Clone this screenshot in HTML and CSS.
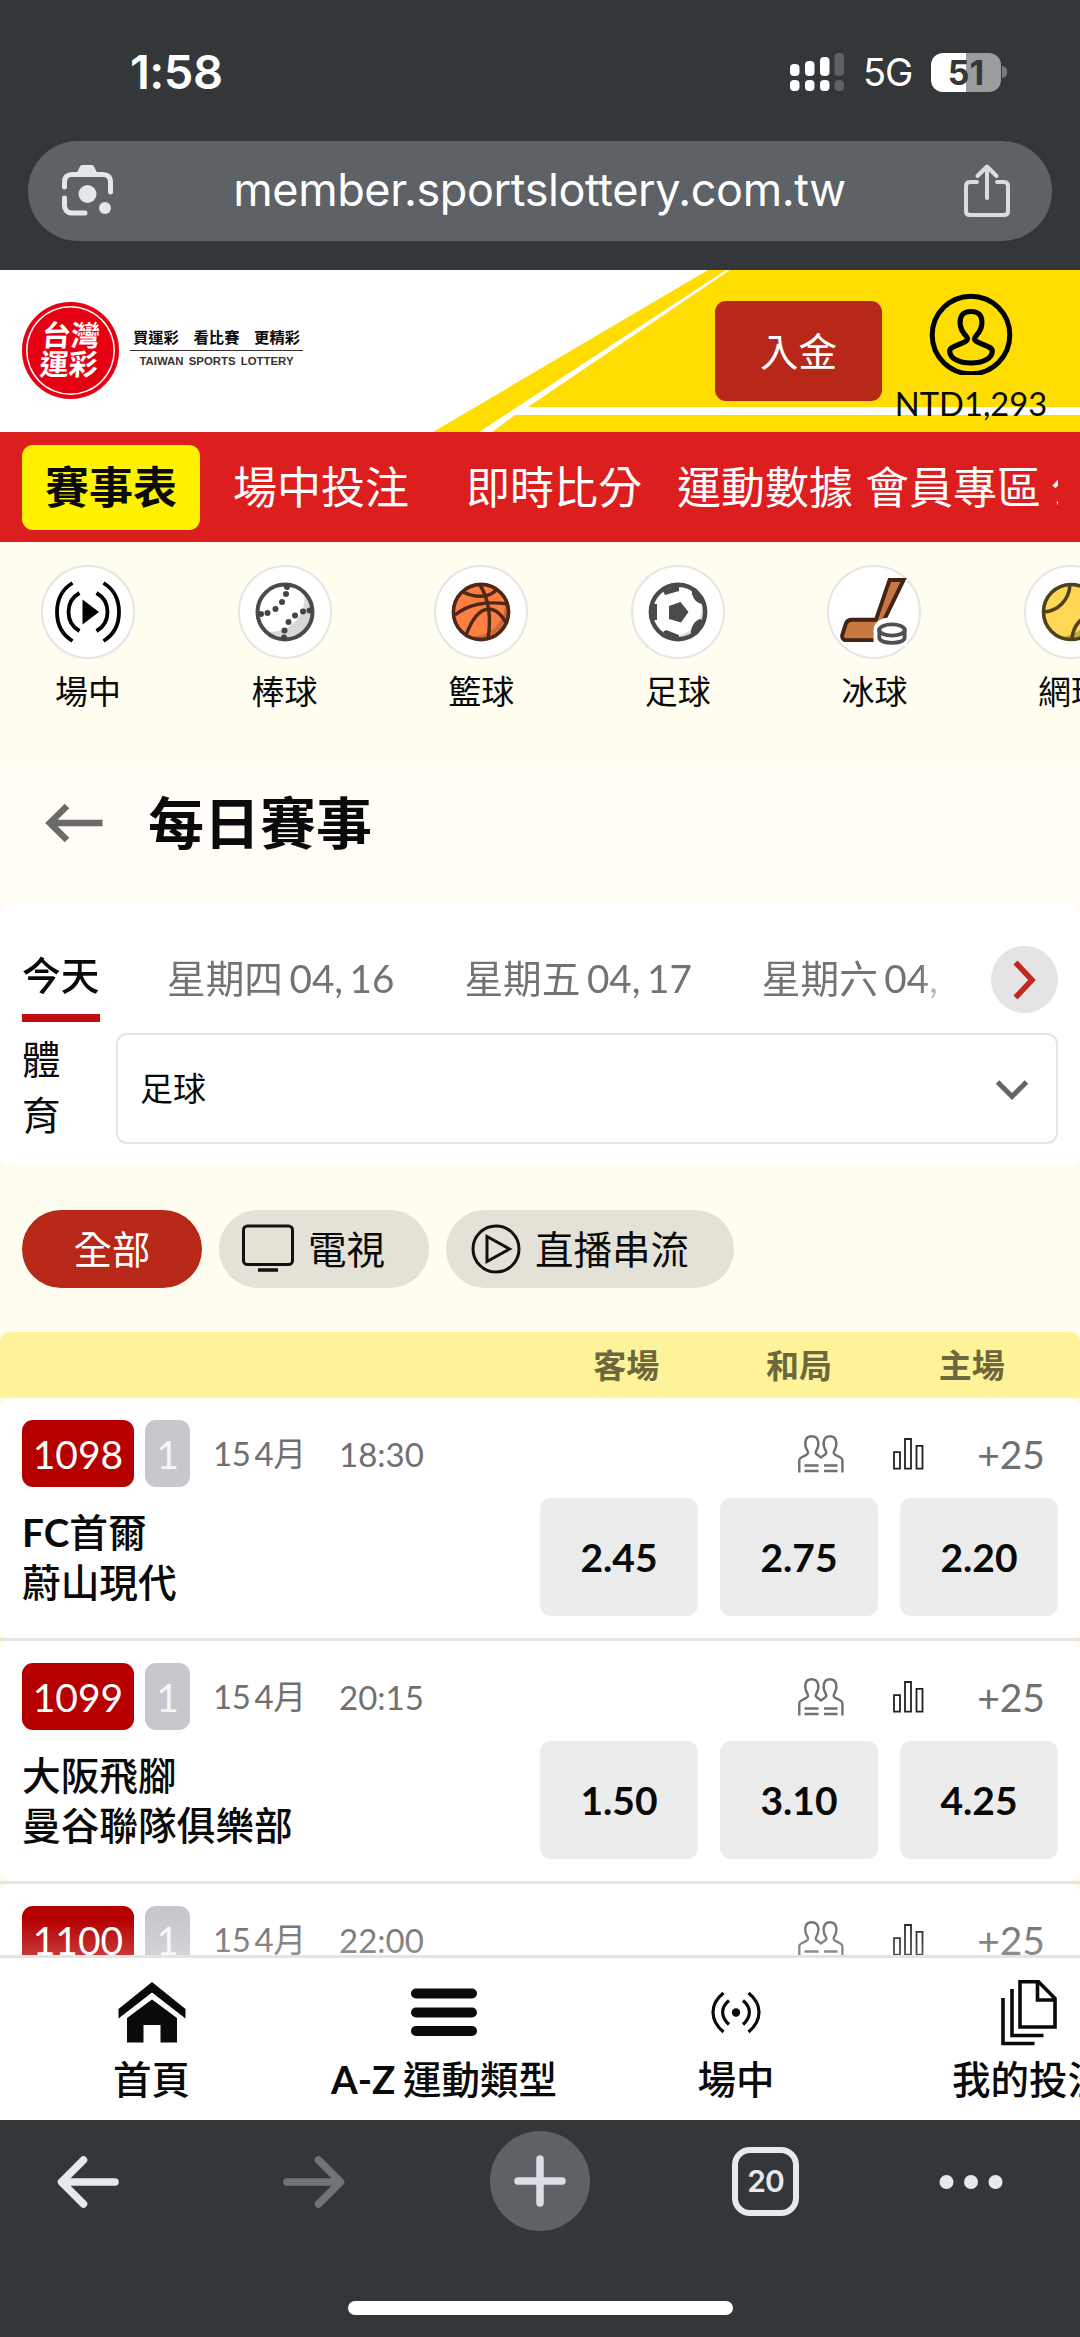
FILE: index.html
```html
<!DOCTYPE html>
<html lang="zh-Hant">
<head>
<meta charset="utf-8">
<title>每日賽事</title>
<link rel="stylesheet" href="styles.css">
</head>
<body>
<svg class="defs" width="0" height="0" aria-hidden="true">
  <symbol id="people" viewBox="0 0 46 38">
    <path d="M1.3 37.500V25.500c0-1.500.6-2.300 2-3l5-2.600c2-1 2.200-2 1.200-4C7.300 12.500 7 9.500 7.400 6.500 8 3 10.200 1.200 13.500 1.200S19.500 3 20.200 6.500c.5 3 .1 6-2 9.400-1 2-.8 3 1.200 4l3.600 2.600 3.600-2.600c2-1 2.200-2 1.200-4-2.100-3.400-2.500-6.400-2-9.400C26.500 3 28.700 1.200 32 1.200S37.500 3 38.200 6.500c.5 3 .1 6-2 9.400-1 2-.8 3 1.200 4l5 2.600c1.400.7 2 1.500 2 3v12" fill="none" stroke="#707070" stroke-width="2.400"/>
    <path d="M6.500 30.500h14M6.500 36h14M26 30.500h13.500M26 36h13.500" stroke="#707070" stroke-width="2.700"/>
  </symbol>
  <symbol id="stats" viewBox="0 0 31 32">
    <path d="M1 14.200h6v16.500H1zM12 1h6v29.700h-6zM23.500 7.800h6v22.900h-6z" fill="none" stroke="#222" stroke-width="1.800"/>
  </symbol>
</svg>

<header class="browser-top">
  <div class="status">
    <span class="clock">1:58</span>
    <div class="status-right">
      <svg width="54" height="40" viewBox="0 0 54 40" fill="#fff"><rect y="12" width="9.500" height="12" rx="4"/><rect x="15" y="9" width="9.500" height="15" rx="4"/><rect x="30" y="5" width="9.500" height="19" rx="4"/><rect y="28" width="9.500" height="11" rx="4"/><rect x="15" y="28" width="9.500" height="11" rx="4"/><rect x="30" y="28" width="9.500" height="11" rx="4"/><g fill="#5e6163"><rect x="44.500" y="1" width="9.500" height="23" rx="4"/><rect x="44.500" y="28" width="9.500" height="11" rx="4"/></g></svg>
      <span class="network">5G</span>
      <span class="battery">51</span><i class="nub"></i>
    </div>
  </div>
  <div class="omnibox">
    <svg width="54" height="54" viewBox="0 0 54 54"><path d="M3.500 23v-5c0-5 3-7.500 7.500-7.500h31c4.500 0 7.500 2.500 7.500 7.500v10M3.500 34v7c0 5 3 8 8 8h12.500" fill="none" stroke="#e3e7ea" stroke-width="5" stroke-linecap="round"/><path d="M14.500 11.500 19 2.500c.5-1 1.500-1.500 2.500-1.500h9c1 0 2 .5 2.500 1.500l4.500 9z" fill="#e3e7ea"/><circle cx="26.500" cy="30" r="9" fill="#e3e7ea"/><circle cx="44" cy="44" r="6" fill="#e3e7ea"/></svg>
    <span class="url">member.sportslottery.com.tw</span>
    <svg width="46" height="54" viewBox="0 0 46 54" fill="none" stroke="#d9dce0" stroke-width="4" stroke-linecap="round" stroke-linejoin="round"><path d="M13 18H6c-2.500 0-4 1.500-4 4v25c0 2.500 1.500 4 4 4h34c2.500 0 4-1.500 4-4V22c0-2.500-1.500-4-4-4h-7M23 34V3M13.500 12 23 2.500l9.500 9.500"/></svg>
  </div>
</header>

<section class="brand">
  <svg class="brand-bg" width="1080" height="162" viewBox="0 0 1080 162"><path d="M433 162 708 0H1080V162z" fill="#fd0"/><path d="M479 162 726 0h4L528 137H1080v8H515l-23 17z" fill="#fff"/></svg>
  <div class="seal"><span>台灣<br>運彩</span></div>
  <div class="slogan">
    <div class="slogan-zh"><span>買運彩</span><span>看比賽</span><span>更精彩</span></div>
    <div class="slogan-en">TAIWAN SPORTS LOTTERY</div>
  </div>
  <button class="deposit">入金</button>
  <div class="account">
    <svg width="84" height="82" viewBox="0 0 84 82" fill="none" stroke="#000"><circle cx="42" cy="42" r="38.800" stroke-width="5"/><path d="M38.500 45.500c0-3-6.500-5-7.300-14.500-.5-8.500 3-12.500 10.800-12.500s11.300 4 10.800 12.500c-.8 9.500-7.300 11.500-7.300 14.500 0 5.500 17.800 6.500 17.800 12.500C63.300 65.500 54 70 42 70S20.700 65.500 20.700 58c0-6 17.800-7 17.800-12.500z" stroke-width="5.200" stroke-linejoin="round"/></svg>
    <span>NTD1,293</span>
  </div>
</section>

<nav class="main-nav">
  <div class="main-nav-scroll">
    <a class="current">賽事表</a><a class="n2">場中投注</a><a class="n3">即時比分</a><a class="n4">運動數據</a><a class="n5">會員專區</a><a class="n6">公告</a>
  </div>
</nav>

<section class="sports">
  <div class="sport"><i><svg width="66" height="62" viewBox="0 0 66 62" fill="none" stroke="#000" stroke-width="3.800"><path d="M17.500 2C6 9 2 20 2 31s4 22 15.500 29M24.500 12c-8 4.500-11 11.500-11 19s3 14.500 11 19M48.500 2C60 9 64 20 64 31s-4 22-15.500 29M41.500 12c8 4.500 11 11.500 11 19s-3 14.500-11 19"/><path d="M27.500 18.500 44 31 27.500 43.500z" fill="#000" stroke="none"/></svg></i><span>場中</span></div>
  <div class="sport"><i><svg width="60" height="60" viewBox="0 0 60 60"><circle cx="30" cy="30" r="27" fill="#fff"/><path d="M49 12c3 22-14 38-36 38 12 11 31 8 40-6 6-11 5-23-4-32z" fill="#d8d8d8"/><circle cx="30" cy="30" r="27.500" fill="none" stroke="#4a4a4a" stroke-width="4"/><g fill="#444"><circle cx="6" cy="32" r="3"/><circle cx="12.500" cy="31" r="3"/><circle cx="20.500" cy="27" r="3"/><circle cx="27" cy="20" r="3"/><circle cx="31" cy="12" r="3"/><circle cx="32" cy="5" r="3"/><circle cx="54.500" cy="28.500" r="3"/><circle cx="48" cy="29.500" r="3"/><circle cx="40" cy="33.500" r="3"/><circle cx="33.500" cy="40" r="3"/><circle cx="29.500" cy="48.500" r="3"/><circle cx="29" cy="55.500" r="3"/></g></svg></i><span>棒球</span></div>
  <div class="sport"><i><svg width="60" height="60" viewBox="0 0 60 60"><circle cx="30" cy="30" r="28" fill="#ff7f43"/><path d="M54 15c2 20-8 37-33 40 12 5 30 1 35-15 2-9 2-18-2-25z" fill="#d0693a"/><g fill="none" stroke="#4d2717" stroke-width="3.400"><circle cx="30" cy="30" r="27.600" stroke-width="3.600"/><path d="M29 3c10 16 11 35 8 54M4 33c14-11 30-14 53-11M12 10c14 7 28 5 34-3M15 53c6-16 13-25 22-26 9 0 14 7 19 15"/></g></svg></i><span>籃球</span></div>
  <div class="sport"><i><svg width="60" height="60" viewBox="0 0 60 60"><circle cx="30" cy="30" r="28" fill="#fff"/><path d="M54 23c0 15-7 26-23 31v4c16 0 27-12 27-28z" fill="#d8d8d8"/><circle cx="30" cy="30" r="27.200" fill="none" stroke="#4a4a4a" stroke-width="4.400"/><path d="m21 24 11.500-4L40.500 30 33 40.500 21 37zM15 9 17 13 31 9V2zM44 8c-1 5 3 13 10 14l2-2L48 6zM3 22h6v16H3zM15 50l3-2 13 5v5l-8-1zM43 52c-1-6 4-14 9-15l5 3-8 13z" fill="#4a4a4a"/></svg></i><span>足球</span></div>
  <div class="sport"><i><svg width="68" height="68" viewBox="0 0 70 70"><path d="M65.500 2H51L37 43H12c-3 0-5 1.500-6 4L2.800 57c-1.500 4 0 7 4 7H38l8-22z" fill="#c8773f" stroke="#402516" stroke-width="4"/><path d="M34.500 70V54c0-7 5-12 14-13h20v29z" fill="#fff"/><g fill="#fff" stroke="#505050" stroke-width="4"><path d="M40.500 53.500v8c0 7 26 7 26 0v-8z"/><ellipse cx="53.500" cy="53.500" rx="13" ry="5.800"/></g></svg></i><span>冰球</span></div>
  <div class="sport"><i><svg width="60" height="60" viewBox="0 0 60 60"><circle cx="30" cy="30" r="27.500" fill="#ffd755"/><path d="M54 17c0 20-12 34-32 38 20 6 36-8 35-26z" fill="#c7a63f"/><g fill="none" stroke="#4d421a" stroke-width="3.600"><circle cx="30" cy="30" r="27.500"/><path d="M3 30c14-1 25-12 26-27M31 57c1-14 11-25 26-26"/></g></svg></i><span>網球</span></div>
</section>

<section class="title">
  <svg width="58" height="40" viewBox="0 0 58 40" fill="none" stroke="#6b6b68" stroke-width="6.500"><path d="M57.500 20H5M22 3 4.800 20 22 37"/></svg>
  <h1>每日賽事</h1>
</section>

<section class="filters">
  <div class="dates">
    <div class="dates-scroll">
      <a class="today">今天</a><a>星期四 04, 16</a><a>星期五 04, 17</a><a>星期六 04, 18</a>
    </div>
    <button class="next"><svg width="24" height="40" viewBox="0 0 24 40"><path d="M2.500 2.500 19 20 2.500 37.500" fill="none" stroke="#c0291e" stroke-width="5.500"/></svg></button>
  </div>
  <div class="sport-pick">
    <label>體育</label>
    <div class="select"><span>足球</span><svg width="34" height="22" viewBox="0 0 34 22"><path d="m2.500 3 14.500 14.500L31.500 3" fill="none" stroke="#666" stroke-width="5"/></svg></div>
  </div>
</section>

<section class="chips">
  <a class="chip all">全部</a>
  <a class="chip tv"><svg width="52" height="50" viewBox="0 0 52 50"><rect x="1.500" y="2" width="49" height="38.500" rx="4" fill="none" stroke="#111" stroke-width="3"/><path d="M16 46h20" stroke="#111" stroke-width="3.500"/></svg><span>電視</span></a>
  <a class="chip live"><svg width="50" height="50" viewBox="0 0 50 50" fill="none" stroke="#111" stroke-width="3"><circle cx="25" cy="25" r="23"/><path d="M16 12.500 38.500 25 16 37.500z" stroke-linejoin="miter"/></svg><span>直播串流</span></a>
</section>

<main class="board">
  <div class="board-head"><span>客場</span><span>和局</span><span>主場</span></div>
  <div class="board-rows">
    <article class="match">
      <div class="meta"><b class="code">1098</b><b class="leg">1</b><span class="day">15 4月</span><span class="time">18:30</span><svg class="people" width="46" height="38"><use href="#people"/></svg><svg class="stats" width="31" height="32"><use href="#stats"/></svg><span class="more">+25</span></div>
      <div class="line"><div class="teams"><b>FC</b>首爾<br>蔚山現代</div><button>2.45</button><button>2.75</button><button>2.20</button></div>
    </article>
    <article class="match">
      <div class="meta"><b class="code">1099</b><b class="leg">1</b><span class="day">15 4月</span><span class="time">20:15</span><svg class="people" width="46" height="38"><use href="#people"/></svg><svg class="stats" width="31" height="32"><use href="#stats"/></svg><span class="more">+25</span></div>
      <div class="line"><div class="teams">大阪飛腳<br>曼谷聯隊俱樂部</div><button>1.50</button><button>3.10</button><button>4.25</button></div>
    </article>
    <article class="match">
      <div class="meta"><b class="code">1100</b><b class="leg">1</b><span class="day">15 4月</span><span class="time">22:00</span><svg class="people" width="46" height="38"><use href="#people"/></svg><svg class="stats" width="31" height="32"><use href="#stats"/></svg><span class="more">+25</span></div>
    </article>
  </div>
</main>

<nav class="tabbar">
  <a class="t1"><svg width="68" height="62" viewBox="0 0 68 62" fill="#0a0a0a"><path d="M34 1 67.500 28v9.500L34 11.500.5 37.500V28z"/><path d="M34 18.500 59 37v24.500H42.500V44h-17v17.500H9V37z"/></svg><span>首頁</span></a>
  <a class="t2"><svg width="66" height="62" viewBox="0 0 66 62" fill="#0a0a0a"><rect y="7.500" width="66" height="10" rx="5"/><rect y="26.500" width="66" height="10" rx="5"/><rect y="45" width="66" height="10" rx="5"/></svg><span><b>A-Z</b> 運動類型</span></a>
  <a class="t3"><svg width="50" height="62" viewBox="0 0 50 62" fill="none" stroke="#0a0a0a" stroke-width="3.200"><path d="M12.500 12c-14 11-14 27 0 39M37.500 12c14 11 14 27 0 39M18 19.500c-8.500 7-8.500 16 0 24M32 19.500c8.500 7 8.500 16 0 24"/><circle cx="25" cy="31.500" r="4.200" fill="#0a0a0a" stroke="none"/></svg><span>場中</span></a>
  <a class="t4"><svg width="58" height="68" viewBox="0 0 58 68" fill="none" stroke="#0a0a0a" stroke-width="3.600"><path d="M20 2.800h18.500L55 19.500V48H20zM37.500 3v18H55M12 10v46.500h31.500M3 19v45.500h31.500"/></svg><span>我的投注</span></a>
</nav>

<footer class="browser-bottom">
  <div class="tools">
    <svg class="back" width="62" height="52" viewBox="0 0 62 52" fill="none" stroke="#e6eaed" stroke-width="7.500" stroke-linecap="round" stroke-linejoin="round"><path d="M58 26H5M26.500 4 4.500 26l22 22"/></svg>
    <svg class="forward" width="62" height="52" viewBox="0 0 62 52" fill="none" stroke="#727374" stroke-width="7.500" stroke-linecap="round" stroke-linejoin="round"><path d="M4 26h53M35.500 4l22 22-22 22"/></svg>
    <div class="new"><svg width="52" height="52" viewBox="0 0 52 52"><path d="M26 4v44M4 26h44" stroke="#dcdfe5" stroke-width="7.500" stroke-linecap="round"/></svg></div>
    <div class="count">20</div>
    <svg class="dots" width="64" height="16" viewBox="0 0 64 16" fill="#e6eaed"><circle cx="7.500" cy="8" r="7"/><circle cx="32" cy="8" r="7"/><circle cx="56.500" cy="8" r="7"/></svg>
  </div>
  <div class="indicator"></div>
</footer>
</body>
</html>
```

FILE: styles.css
```css
* { box-sizing: border-box; margin: 0; padding: 0; }

body {
  width: 1080px;
  height: 2337px;
  overflow: hidden;
  display: flex;
  flex-direction: column;
  background: #fffdf0;
  color: #0a0a0a;
  font-family: Lato, "Noto Sans CJK TC", sans-serif;
  white-space: nowrap;
}

body > * { flex: none; }
.defs { display: none; }
svg { display: block; flex: none; }
i { font-style: normal; }
button { border: 0; font: inherit; color: inherit; }

/* Browser chrome, top */
.browser-top {
  height: 270px;
  background: #33373a;
  color: #fff;
  font-family: Inter, sans-serif;
}
.status {
  height: 141px;
  padding: 47px 73px 0 130px;
  display: flex;
  justify-content: space-between;
  align-items: flex-start;
}
.clock { font-size: 47px; font-weight: 600; line-height: 50px; letter-spacing: -.5px; }
.status-right { display: flex; align-items: center; height: 50px; }
.network { margin-left: 19px; width: 68px; font-size: 38px; line-height: 50px; letter-spacing: -1px; }
.battery {
  width: 70px;
  height: 39px;
  border-radius: 12px;
  background: linear-gradient(90deg, #fff 50%, #9b9c9e 50%);
  color: #33373a;
  font-size: 34px;
  font-weight: 700;
  line-height: 39px;
  text-align: center;
}
.nub { width: 5px; height: 12px; margin-left: 1px; border-radius: 0 5px 5px 0; background: #77797b; }
.omnibox {
  width: 1024px;
  height: 100px;
  margin: 0 auto;
  padding: 0 42px 0 33px;
  border-radius: 50px;
  background: #5d6266;
  display: flex;
  align-items: center;
  justify-content: space-between;
}
.url { font-size: 45px; line-height: 60px; letter-spacing: -.4px; padding-bottom: 2px; }

/* Brand header */
.brand {
  position: relative;
  height: 162px;
  background: #fff;
  display: flex;
  align-items: flex-start;
  padding-left: 22px;
}
.brand > * { position: relative; }
.brand > .brand-bg { position: absolute; left: 0; top: 0; }
.seal {
  width: 97px;
  height: 97px;
  margin-top: 32px;
  padding-bottom: 6px;
  border-radius: 50%;
  background: #e60012;
  display: flex;
  align-items: center;
  justify-content: center;
  box-shadow: inset 0 0 0 4px #e60012, inset 0 0 0 5.500px #fff;
}
.seal span {
  color: #fff;
  font: 700 29px/29px "Noto Sans CJK TC", sans-serif;
  transform: skewX(-4deg);
}
.slogan { width: 173px; margin: 56px 0 0 11px; }
.slogan-zh {
  height: 25px;
  padding: 0 3px;
  border-bottom: 1.500px solid #3a3030;
  display: flex;
  justify-content: space-between;
  font: 700 15.300px/20px "Noto Sans CJK TC", sans-serif;
}
.slogan-en {
  text-align: center;
  font: 700 11.400px/20px "Liberation Sans", sans-serif;
  color: #3a3030;
  word-spacing: 2px;
}
.deposit {
  width: 167px;
  height: 100px;
  margin: 31px 0 0 412px;
  padding-bottom: 4px;
  border-radius: 11px;
  background: #b72819;
  color: #fff;
  font-size: 38.500px;
}
.account { width: 166px; margin: 23px 0 0 6px; display: flex; flex-direction: column; align-items: center; }
.account span { font-size: 32.700px; line-height: 40px; margin-top: 9px; }

/* Red navigation */
.main-nav { height: 110px; padding: 13px 22px; background: #dc1e1f; color: #fff; }
.main-nav-scroll { display: flex; overflow: hidden; height: 85px; font-size: 44px; line-height: 85px; }
.main-nav a { flex: none; }
.current { width: 178px; border-radius: 11px; background: #fff200; color: #0a0a0a; font-weight: 700; text-align: center; }
.n2 { margin-left: 33px; }
.n3 { margin-left: 57px; }
.n4 { margin-left: 35px; }
.n5 { margin-left: 12px; }
.main-nav .n6 { margin-left: 10px; }

/* Sport icons */
.sports { height: 222px; padding: 23px 0 0 41px; display: flex; gap: 102.600px; overflow: hidden; }
.sport { flex: none; width: 94px; display: flex; flex-direction: column; align-items: center; }
.sport i {
  width: 94px;
  height: 94px;
  border: 2.500px solid #e5e5e5;
  border-radius: 50%;
  background: #fff;
  display: flex;
  align-items: center;
  justify-content: center;
}
.sport span { margin-top: 12px; font-size: 33px; line-height: 40px; }

/* Page title */
.title { height: 139px; padding: 0 45px 22px; background: #fffdf5; display: flex; align-items: center; gap: 45px; }
h1 { font-size: 56px; line-height: 70px; font-weight: 700; }

/* Date and sport filters */
.filters { height: 263px; padding: 0 22px; background: #fff; border-radius: 11px; }
.dates { height: 130px; display: flex; justify-content: space-between; }
.dates-scroll {
  width: 926px;
  display: flex;
  gap: 70px;
  padding-top: 42px;
  overflow: hidden;
  font-size: 38.700px;
  line-height: 66px;
  word-spacing: -3.500px;
  color: #737373;
  -webkit-mask-image: linear-gradient(90deg, #000 97%, transparent);
  mask-image: linear-gradient(90deg, #000 97%, transparent);
}
.dates-scroll a { flex: none; }
.dates-scroll .today {
  width: 78px;
  height: 77px;
  margin-right: -3px;
  border-bottom: 8px solid #be0e10;
  color: #0a0a0a;
  font-weight: 500;
  line-height: 60px;
}
.next {
  width: 67px;
  height: 67px;
  margin-top: 43px;
  border-radius: 50%;
  background: #e4e4e4;
  display: flex;
  align-items: center;
  justify-content: center;
}
.sport-pick { display: flex; }
.sport-pick label { width: 39px; margin: -1px 55px 0 0; font-size: 38.500px; line-height: 55.500px; white-space: normal; word-break: break-all; }
.select {
  flex: 1;
  height: 111px;
  padding: 0 27px 2px 22px;
  border: 2.700px solid #e4e4e4;
  border-radius: 11px;
  display: flex;
  align-items: center;
  justify-content: space-between;
  font-size: 33px;
  line-height: 40px;
}
.select svg { margin-top: 4px; }

/* Filter chips */
.chips { height: 166px; padding: 44px 22px 0; display: flex; gap: 17px; }
.chip {
  height: 78px;
  border-radius: 39px;
  background: #e4e2d7;
  display: flex;
  align-items: center;
  font-size: 38.500px;
  line-height: 50px;
}
.all { width: 180px; justify-content: center; background: #b72819; color: #fff; }
.tv { width: 210px; padding-left: 23px; gap: 14px; }
.live { width: 288px; padding-left: 25px; gap: 14px; }

/* Match board */
.board { height: 623px; overflow: hidden; position: relative; background: #fffbe4; }
.board::after {
  content: "";
  position: absolute;
  left: 0;
  right: 0;
  bottom: 0;
  height: 36px;
  background: linear-gradient(rgba(255,255,255,0), rgba(255,255,255,.22));
}
.board-head {
  height: 66px;
  padding-left: 540px;
  padding-right: 22px;
  border-radius: 11px 11px 0 0;
  background: #fff399;
  color: #6c673f;
  display: grid;
  grid-template-columns: repeat(3, 172.700px);
  text-align: center;
  font: 700 33px/64px "Noto Sans CJK TC", sans-serif;
}
.board-rows { display: flex; flex-direction: column; }
.match {
  height: 240px;
  padding: 22px;
  border-radius: 11px;
  background: #fff;
}
.match + .match { margin-top: 3px; position: relative; }
.match + .match::before { content: ""; position: absolute; left: 0; right: 0; top: -3px; height: 3px; background: #e5e5e5; }
.meta { height: 67px; display: flex; align-items: center; color: #707070; font-size: 33px; }
.meta b { height: 67px; border-radius: 11px; color: #fff; font-size: 39px; font-weight: 400; line-height: 68px; text-align: center; }
.code { width: 112px; background: #b60000; }
.leg { width: 45px; margin-left: 11px; background: #c8c7cd; }
.meta .leg { color: #f6f6f8; }
.day { width: 126px; margin-left: 23px; padding-bottom: 4px; word-spacing: -4px; letter-spacing: -.4px; }
.time { width: 90px; padding-top: 1px; }
.people { margin-left: 368.500px; }
.stats { margin-left: 49.500px; }
.more { flex: 1; padding-right: 13px; padding-top: 1px; text-align: right; font-size: 39px; }
.line { margin-top: 11px; display: flex; gap: 22px; }
.teams { flex: 1; margin-top: 9px; font-size: 38.700px; font-weight: 500; line-height: 50px; }
.teams b { font-weight: 700; }
.line button { width: 158px; height: 118px; border-radius: 11px; background: #ececec; font-size: 39px; font-weight: 700; }

/* Site tab bar */
.tabbar {
  height: 165px;
  border-top: 3px solid #e4e4e4;
  background: #fff;
  display: flex;
  overflow: hidden;
  font-size: 38.500px;
  line-height: 50px;
  font-weight: 500;
}
.tabbar a { flex: none; display: flex; flex-direction: column; align-items: center; padding-top: 23px; }
.tabbar span { margin-top: 11px; }
.tabbar b { margin-right: -2px; }
.t1 { width: 303px; }
.t2 { width: 282px; }
.t3 { width: 302px; }
.t4 { width: 284px; }
.tabbar .t4 { padding-top: 21px; }
.tabbar .t4 span { margin-top: 7px; }

/* Browser chrome, bottom */
.browser-bottom { height: 217px; background: #33373a; }
.tools { height: 181px; padding: 11px 77px 0 57px; display: flex; align-items: flex-start; }
.back, .forward { margin-top: 25px; }
.forward { margin-left: 164px; }
.new {
  width: 100px;
  height: 100px;
  margin-left: 145px;
  border-radius: 50%;
  background: #5d6266;
  display: flex;
  align-items: center;
  justify-content: center;
}
.count {
  width: 67px;
  height: 69px;
  margin: 16px 0 0 142px;
  border: 6.500px solid #e6eaed;
  border-radius: 18px;
  color: #e6eaed;
  font: 600 30px/56px Inter, sans-serif;
  letter-spacing: -1px;
  text-align: center;
}
.dots { margin: 43px 0 0 140px; }
.indicator { width: 385px; height: 14px; margin: 0 auto; border-radius: 7px; background: #fff; }
```
